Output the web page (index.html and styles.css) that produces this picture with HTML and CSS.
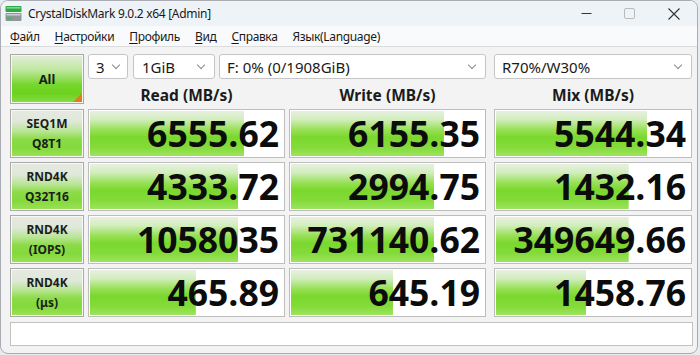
FILE: index.html
```html
<!DOCTYPE html>
<html lang="ru">
<head>
<meta charset="utf-8">
<title>CrystalDiskMark 9.0.2 x64 [Admin]</title>
<link rel="stylesheet" href="styles.css">
</head>
<body>
<div class="window">
  <div class="titlebar">
    <svg class="app-icon" width="17" height="17" viewBox="0 0 17 17">
      <rect x="0.5" y="1" width="16" height="6" rx="1" fill="#2fa84a"/>
      <rect x="1.5" y="2" width="14" height="1.6" fill="#7fd88a"/>
      <rect x="0.5" y="8" width="16" height="8" rx="1" fill="#8e9696"/>
      <rect x="1.5" y="9" width="14" height="1.5" fill="#c9cfcf"/>
      <rect x="2.5" y="12.5" width="4" height="2" fill="#36c24c"/>
    </svg>
    <span class="title">CrystalDiskMark 9.0.2 x64 [Admin]</span>
    <div class="controls">
      <span class="ctl"><svg width="11" height="11" viewBox="0 0 11 11"><path d="M0.5 5.5H10.5" stroke="#333" stroke-width="1"/></svg></span>
      <span class="ctl"><svg width="11" height="11" viewBox="0 0 11 11"><rect x="0.5" y="0.5" width="10" height="10" rx="1.5" fill="none" stroke="#bbb" stroke-width="1"/></svg></span>
      <span class="ctl close"><svg width="12" height="12" viewBox="0 0 12 12"><path d="M0.5 0.5L11.5 11.5M11.5 0.5L0.5 11.5" stroke="#333" stroke-width="1.1"/></svg></span>
    </div>
  </div>
  <div class="menubar">
    <span class="menu"><u>Ф</u>айл</span>
    <span class="menu"><u>Н</u>астройки</span>
    <span class="menu"><u>П</u>рофиль</span>
    <span class="menu"><u>В</u>ид</span>
    <span class="menu"><u>С</u>правка</span>
    <span class="menu">Язык(Language)</span>
  </div>
  <div class="main">
    <div class="top">
      <div class="btn-all">All<span class="corner"></span></div>
      <div class="top-right">
        <div class="combos">
          <div class="combo c-count"><span>3</span><span class="chev"></span></div>
          <div class="combo c-size"><span>1GiB</span><span class="chev"></span></div>
          <div class="combo c-drive"><span>F: 0% (0/1908GiB)</span><span class="chev"></span></div>
          <div class="combo c-mix"><span>R70%/W30%</span><span class="chev"></span></div>
        </div>
        <div class="headers">
          <div class="hdr col-read">Read (MB/s)</div>
          <div class="hdr col-write">Write (MB/s)</div>
          <div class="hdr col-mix">Mix (MB/s)</div>
        </div>
      </div>
    </div>

    <div class="row">
      <div class="label">SEQ1M<br>Q8T1</div>
      <div class="cell col-read" style="--w:79.7%">6555.62</div>
      <div class="cell col-write" style="--w:79.2%">6155.35</div>
      <div class="cell col-mix" style="--w:77.8%">5544.34</div>
    </div>
    <div class="row">
      <div class="label">RND4K<br>Q32T16</div>
      <div class="cell col-read" style="--w:76.6%">4333.72</div>
      <div class="cell col-write" style="--w:74.1%">2994.75</div>
      <div class="cell col-mix" style="--w:68.2%">1432.16</div>
    </div>
    <div class="row">
      <div class="label">RND4K<br>(IOPS)</div>
      <div class="cell col-read" style="--w:76.6%">1058035</div>
      <div class="cell col-write" style="--w:74.1%">731140.62</div>
      <div class="cell col-mix" style="--w:68.2%">349649.66</div>
    </div>
    <div class="row">
      <div class="label">RND4K<br>(μs)</div>
      <div class="cell col-read" style="--w:54.8%">465.89</div>
      <div class="cell col-write" style="--w:52.8%">645.19</div>
      <div class="cell col-mix" style="--w:46.5%">1458.76</div>
    </div>

    <div class="comment"></div>
  </div>
</div>
</body>
</html>
```
FILE: styles.css
```css
* { box-sizing: border-box; }
html, body { margin: 0; padding: 0; }
body {
  background: #e8ecf0;
  width: 700px;
  height: 355px;
  overflow: hidden;
  font-family: "Noto Sans", "Open Sans", sans-serif;
  color: #1b1b1b;
}
.window {
  width: 698px;
  height: 354px;
  border: 1px solid #a9adb2;
  border-radius: 8px;
  overflow: hidden;
  background: #f3f3f3;
  display: flex;
  flex-direction: column;
}
.titlebar {
  height: 25px;
  background: #eef3f8;
  display: flex;
  align-items: center;
  padding-left: 4px;
}
.app-icon { margin-right: 6px; margin-top: -1px; }
.title {
  font-size: 12px;
  color: #1a1a1a;
  letter-spacing: -0.3px;
}
.controls {
  margin-left: auto;
  display: flex;
  height: 100%;
}
.ctl {
  width: 43px;
  display: flex;
  align-items: center;
  justify-content: center;
}
.ctl.close { width: 46px; }
.menubar {
  height: 21px;
  background: #f9fafb;
  border-bottom: 1px solid #dcdcdc;
  display: flex;
  align-items: center;
  gap: 15px;
  padding-left: 9px;
  font-size: 12px;
  letter-spacing: -0.35px;
  color: #1a1a1a;
}
.menu u { text-decoration-thickness: 1px; text-underline-offset: 2px; }
.main {
  flex: 1;
  padding: 7px 0 0 9px;
  display: flex;
  flex-direction: column;
  gap: 4px;
}
.top {
  display: flex;
  gap: 4px;
  margin-bottom: 1px;
}
.btn-all {
  width: 74px;
  height: 50px;
  border: 1px solid #a9a9a9;
  box-shadow: inset 0 0 0 1px #f4f8f0;
  background: linear-gradient(to bottom, #e3eedb 0%, #c2e8a2 30%, #76d62c 62%, #6cd21f 80%, #88de44 100%);
  display: flex;
  align-items: center;
  justify-content: center;
  font-weight: 700;
  font-size: 13px;
  position: relative;
}
.corner {
  position: absolute;
  right: 1px;
  bottom: 1px;
  width: 0;
  height: 0;
  border-left: 9px solid transparent;
  border-bottom: 9px solid #e87a1c;
}
.top-right { display: flex; flex-direction: column; }
.combos {
  display: flex;
  height: 25px;
  gap: 4px;
}
.combo {
  height: 25px;
  background: #fff;
  border: 1px solid #c5c5c5;
  border-radius: 3px;
  display: flex;
  align-items: center;
  padding-left: 8px;
  padding-right: 8px;
  font-size: 15px;
  color: #1a1a1a;
}
.combo span:first-child { flex: 1; white-space: nowrap; }
.chev {
  width: 6px;
  height: 6px;
  border-right: 1px solid #8a8a8a;
  border-bottom: 1px solid #8a8a8a;
  transform: rotate(45deg);
  margin-top: -4px;
  margin-right: 2px;
}
.c-count { width: 40px; margin-right: 1px; padding-left: 7px; padding-right: 6px; }
.c-size { width: 82px; }
.c-drive { width: 267px; padding-left: 7px; }
.c-mix { width: 198px; margin-left: 4px; padding-left: 7px; }
.headers {
  display: flex;
  gap: 4px;
  height: 25px;
  align-items: center;
}
.hdr {
  text-align: center;
  font-weight: 700;
  font-size: 15.5px;
  padding-top: 7px;
}
.col-read { width: 197px; }
.col-write { width: 197px; }
.col-mix { width: 198px; margin-left: 4px; }
.row {
  display: flex;
  gap: 4px;
  height: 49px;
}
.label {
  width: 74px;
  border: 1px solid #aaaaaa;
  box-shadow: inset 0 0 0 1px #f7f9f5;
  background: linear-gradient(to bottom, #e6e9e3 0%, #dfe8d8 25%, #b9e596 45%, #8cdb47 62%, #84d93c 80%, #9be258 100%);
  display: flex;
  align-items: center;
  justify-content: center;
  text-align: center;
  font-weight: 700;
  font-size: 12px;
  line-height: 20px;
  color: #1d1d1d;
}
.cell {
  border: 1px solid #bdbdbd;
  box-shadow: inset 0 0 0 1px #fff;
  background: linear-gradient(to bottom, #eaf0e5 0%, #d2eebd 20%, #98e057 42%, #7ad82d 58%, #84db3a 80%, #a0e463 100%) 0 0 / var(--w) 100% no-repeat, #fff;
  display: flex;
  align-items: center;
  justify-content: flex-end;
  padding-right: 5px;
  padding-top: 1px;
  font-family: "Open Sans", "Noto Sans", sans-serif;
  font-weight: 700;
  font-size: 35.5px;
  color: #0c0c0c;
  line-height: 1;
}
.comment {
  width: 683px;
  height: 24px;
  margin-top: 1px;
  background: #fff;
  border: 1px solid #c2c2c2;
}
```
